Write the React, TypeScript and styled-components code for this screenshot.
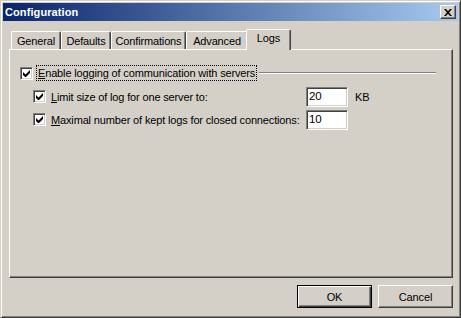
import * as React from "react";
import styled, { createGlobalStyle } from "styled-components";

const Face = "#D4D0C8";
const Shadow = "#808080";
const DarkShadow = "#404040";

const GlobalStyle = createGlobalStyle`
    html, body {
        margin: 0;
        padding: 0;
        background: ${Face};
    }
    body {
        font-family: "Liberation Sans", Arial, sans-serif;
        font-size: 11px;
        letter-spacing: -0.15px;
        color: #000;
    }
`;

const Window = styled.div`
    box-sizing: border-box;
    width: 461px;
    height: 318px;
    display: flex;
    flex-direction: column;
    padding: 2px;
    background: ${Face};
    border: 1px solid;
    border-color: ${Face} ${DarkShadow} ${DarkShadow} ${Face};
    box-shadow: inset 1px 1px #fff, inset -1px -1px ${Shadow};
`;

const TitleBar = styled.div`
    height: 18px;
    display: flex;
    align-items: center;
    justify-content: space-between;
    padding: 0 2px;
    background: linear-gradient(to right, #0A246A, #A6CAF0);
    color: #fff;
    font-weight: bold;
    font-size: 11px;
    letter-spacing: 0.1px;
`;

const TitleText = styled.span`
    line-height: 18px;
`;

const CloseBtn = styled.div`
    box-sizing: border-box;
    width: 16px;
    height: 14px;
    display: flex;
    align-items: center;
    justify-content: center;
    background: ${Face};
    border: 1px solid;
    border-color: #fff ${DarkShadow} ${DarkShadow} #fff;
    box-shadow: inset -1px -1px ${Shadow};
`;

const Body = styled.div`
    flex: 1;
    display: flex;
    flex-direction: column;
    padding: 8px 5px 0 6px;
`;

const TabStrip = styled.div`
    height: 20px;
    display: flex;
    align-items: flex-end;
    padding-left: 2px;
    position: relative;
    z-index: 1;
`;

const Tab = styled.div<{ $active?: boolean; $width: number }>`
    box-sizing: border-box;
    width: ${p => p.$width + (p.$active ? 4 : 0)}px;
    height: ${p => (p.$active ? "21px" : "18px")};
    margin: ${p => (p.$active ? "0 -2px -1px -2px" : "0")};
    padding-top: ${p => (p.$active ? "1px" : "2px")};
    background: ${Face};
    border-top: 1px solid #fff;
    border-left: 1px solid #fff;
    border-right: 1px solid ${DarkShadow};
    border-radius: 2px 2px 0 0;
    box-shadow: inset -1px 0 ${Shadow};
    line-height: 14px;
    text-align: center;
    white-space: nowrap;
`;

const Panel = styled.div`
    box-sizing: border-box;
    height: 229px;
    padding: 15px 0 0 10px;
    border: 1px solid;
    border-color: #fff ${DarkShadow} ${DarkShadow} #fff;
    box-shadow: inset -1px -1px ${Shadow};
`;

const Row = styled.div<{ $indent?: number; $height: number; $top?: number }>`
    display: flex;
    align-items: center;
    height: ${p => p.$height}px;
    margin-left: ${p => p.$indent ?? 0}px;
    margin-top: ${p => p.$top ?? 0}px;
`;

const Box = styled.div`
    box-sizing: border-box;
    flex: 0 0 13px;
    width: 13px;
    height: 13px;
    margin-right: 3px;
    display: flex;
    align-items: center;
    justify-content: center;
    background: #fff;
    border: 1px solid;
    border-color: ${Shadow} #fff #fff ${Shadow};
    box-shadow: inset 1px 1px ${DarkShadow}, inset -1px -1px ${Face};
`;

const Label = styled.span<{ $focus?: boolean; $width?: number }>`
    box-sizing: border-box;
    display: inline-block;
    padding: 0 1px 0 1px;
    line-height: 14px;
    white-space: nowrap;
    border: 1px dotted ${p => (p.$focus ? "#000" : "transparent")};
    width: ${p => (p.$width ? `${p.$width}px` : "auto")};
    flex: 0 0 auto;
`;

const Key = styled.span`
    text-decoration: underline;
`;

const Groove = styled.div`
    flex: 1;
    height: 0;
    margin: 0 16px 0 2px;
    border-top: 1px solid ${Shadow};
    border-bottom: 1px solid #fff;
`;

const Field = styled.div`
    box-sizing: border-box;
    width: 42px;
    height: 20px;
    padding: 0 2px;
    background: #fff;
    border: 1px solid;
    border-color: ${Shadow} #fff #fff ${Shadow};
    box-shadow: inset 1px 1px ${DarkShadow}, inset -1px -1px ${Face};
    line-height: 17px;
    font-size: 11.5px;
`;

const Unit = styled.span`
    margin-left: 7px;
`;

const ButtonRow = styled.div`
    display: flex;
    justify-content: flex-end;
    gap: 6px;
    padding-top: 7px;
`;

const Button = styled.div<{ $default?: boolean }>`
    box-sizing: border-box;
    width: 75px;
    height: 23px;
    display: flex;
    align-items: center;
    justify-content: center;
    background: ${Face};
    border: 1px solid;
    border-color: ${p => (p.$default ? "#000" : `#fff ${DarkShadow} ${DarkShadow} #fff`)};
    box-shadow: ${p =>
        p.$default
            ? `inset 1px 1px #fff, inset -1px -1px ${DarkShadow}, inset -2px -2px ${Shadow}`
            : `inset -1px -1px ${Shadow}`};
`;

const Check = () => (
    <svg width="7" height="7" viewBox="0 0 7 7">
        <path d="M0 2v3l2 2h1l4-4V0L2.5 4.5z" fill="#000" />
    </svg>
);

const Cross = () => (
    <svg width="8" height="7" viewBox="0 0 8 7">
        <path d="M0 0h2l2 2.3L6 0h2L5 3.5 8 7H6L4 4.7 2 7H0l3-3.5z" fill="#000" />
    </svg>
);

const tabs: [string, number][] = [
    ["General", 50],
    ["Defaults", 50],
    ["Confirmations", 75],
    ["Advanced", 62],
    ["Logs", 41],
];

export default class App extends React.Component {
    render() {
        return (
            <>
                <GlobalStyle />
                <Window>
                    <TitleBar>
                        <TitleText>Configuration</TitleText>
                        <CloseBtn><Cross /></CloseBtn>
                    </TitleBar>
                    <Body>
                        <TabStrip>
                            {tabs.map(([t, w]) => (
                                <Tab key={t} $width={w} $active={t === "Logs"}>{t}</Tab>
                            ))}
                        </TabStrip>
                        <Panel>
                            <Row $height={16}>
                                <Box><Check /></Box>
                                <Label $focus><Key>E</Key>nable logging of communication with servers</Label>
                                <Groove />
                            </Row>
                            <Row $indent={13} $height={21} $top={5}>
                                <Box><Check /></Box>
                                <Label $width={257}><Key>L</Key>imit size of log for one server to:</Label>
                                <Field>20</Field>
                                <Unit>KB</Unit>
                            </Row>
                            <Row $indent={13} $height={21} $top={2}>
                                <Box><Check /></Box>
                                <Label $width={257}><Key>M</Key>aximal number of kept logs for closed connections:</Label>
                                <Field>10</Field>
                            </Row>
                        </Panel>
                        <ButtonRow>
                            <Button $default>OK</Button>
                            <Button>Cancel</Button>
                        </ButtonRow>
                    </Body>
                </Window>
            </>
        );
    }
}
